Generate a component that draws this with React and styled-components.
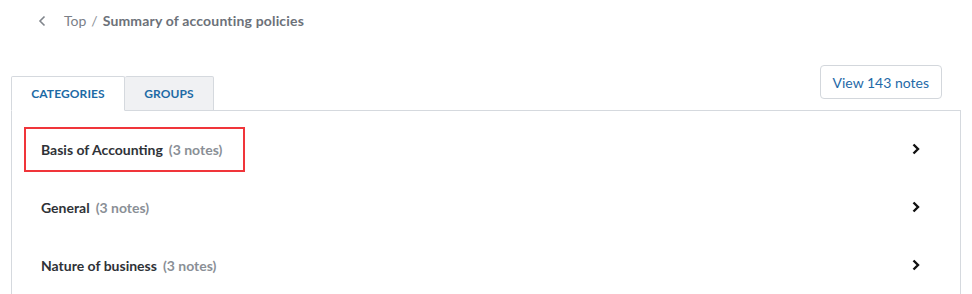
import React, { useState } from 'react';
import styled, { createGlobalStyle } from 'styled-components';

const GlobalStyle = createGlobalStyle`
    body {
        margin: 0;
        font-family: Lato, "Open Sans", Arial, sans-serif;
        background: #ffffff;
    }
`;

const Page = styled.div`
    padding: 0 11px;
    width: 950px;
    height: 294px;
    overflow: hidden;
`;

const Breadcrumb = styled.div`
    display: flex;
    align-items: center;
    height: 41px;
    padding-left: 27px;
    font-size: 14px;
    color: #7b8088;
`;

const BackButton = styled.span`
    display: flex;
    align-items: center;
    margin-right: 17px;
    color: #7b8088;
`;

const Crumb = styled.span`
    font-weight: ${(p) => (p.current ? 700 : 400)};
    letter-spacing: ${(p) => (p.current ? '0.17px' : '0')};
    color: ${(p) => (p.current ? '#6c7179' : '#7b8088')};
`;

const Separator = styled.span`
    margin: 0 5px;
    color: #8b9097;
`;

const TabBar = styled.div`
    display: flex;
    align-items: flex-end;
    justify-content: space-between;
    margin-top: 24px;
`;

const Tabs = styled.div`
    display: flex;
    margin-bottom: -1px;
    position: relative;
    z-index: 1;
`;

const Tab = styled.button`
    height: 35px;
    padding: 0;
    width: ${(p) => p.width}px;
    font-family: inherit;
    font-size: 12px;
    font-weight: 700;
    letter-spacing: 0.1px;
    text-transform: uppercase;
    color: #1d6aa5;
    background: ${(p) => (p.active ? '#ffffff' : '#f0f1f3')};
    border: 1px solid #d5d9de;
    border-bottom-color: ${(p) => (p.active ? '#ffffff' : '#d5d9de')};
    border-left-width: ${(p) => (p.first ? '1px' : '0')};
    border-radius: 2px 2px 0 0;
    cursor: pointer;
`;

const ViewButton = styled.button`
    height: 34px;
    padding: 0 12px;
    margin: 0 19px 11px 0;
    font-family: inherit;
    font-size: 14px;
    color: #1f6aa8;
    background: #ffffff;
    border: 1px solid #d3d7dc;
    border-radius: 4px;
    cursor: pointer;
`;

const Panel = styled.div`
    border: 1px solid #d5d9de;
    border-bottom: none;
    padding-top: 9px;
    min-height: 200px;
`;

const Row = styled.div`
    display: flex;
    align-items: center;
    justify-content: space-between;
    height: 58px;
    padding: 0 39px 0 12px;
    cursor: pointer;
`;

const Label = styled.div`
    display: flex;
    align-items: center;
    height: 41px;
    padding: 0 21px 0 15px;
    border: 2px solid ${(p) => (p.highlight ? '#f0353a' : 'transparent')};
    font-size: 14px;
`;

const Name = styled.span`
    font-weight: 700;
    color: #2f3237;
`;

const Count = styled.span`
    margin-left: 6px;
    font-weight: 700;
    color: #8a8f96;
`;

const Chevron = () => (
    <svg width="10" height="12" viewBox="0 0 10 12">
        <path d="M2.5 1.5 L7 6 L2.5 10.5" fill="none" stroke="#111" strokeWidth="2.4" />
    </svg>
);

const categories = [
    { name: 'Basis of Accounting', notes: 3 },
    { name: 'General', notes: 3 },
    { name: 'Nature of business', notes: 3 },
];

const App = () => {
    const [tab, setTab] = useState('categories');

    return (
        <Page>
            <GlobalStyle />
            <Breadcrumb>
                <BackButton>
                    <svg width="9" height="12" viewBox="0 0 9 12">
                        <path d="M6.5 1.5 L2 6 L6.5 10.5" fill="none" stroke="#80858c" strokeWidth="1.6" />
                    </svg>
                </BackButton>
                <Crumb>Top</Crumb>
                <Separator>/</Separator>
                <Crumb current>Summary of accounting policies</Crumb>
            </Breadcrumb>
            <TabBar>
                <Tabs>
                    <Tab first width={114} active={tab === 'categories'} onClick={() => setTab('categories')}>
                        Categories
                    </Tab>
                    <Tab width={89} active={tab === 'groups'} onClick={() => setTab('groups')}>
                        Groups
                    </Tab>
                </Tabs>
                <ViewButton>View 143 notes</ViewButton>
            </TabBar>
            <Panel>
                {categories.map((c, i) => (
                    <Row key={c.name}>
                        <Label highlight={i === 0}>
                            <Name>{c.name}</Name>
                            <Count>({c.notes} notes)</Count>
                        </Label>
                        <Chevron />
                    </Row>
                ))}
            </Panel>
        </Page>
    );
};

export default App;
